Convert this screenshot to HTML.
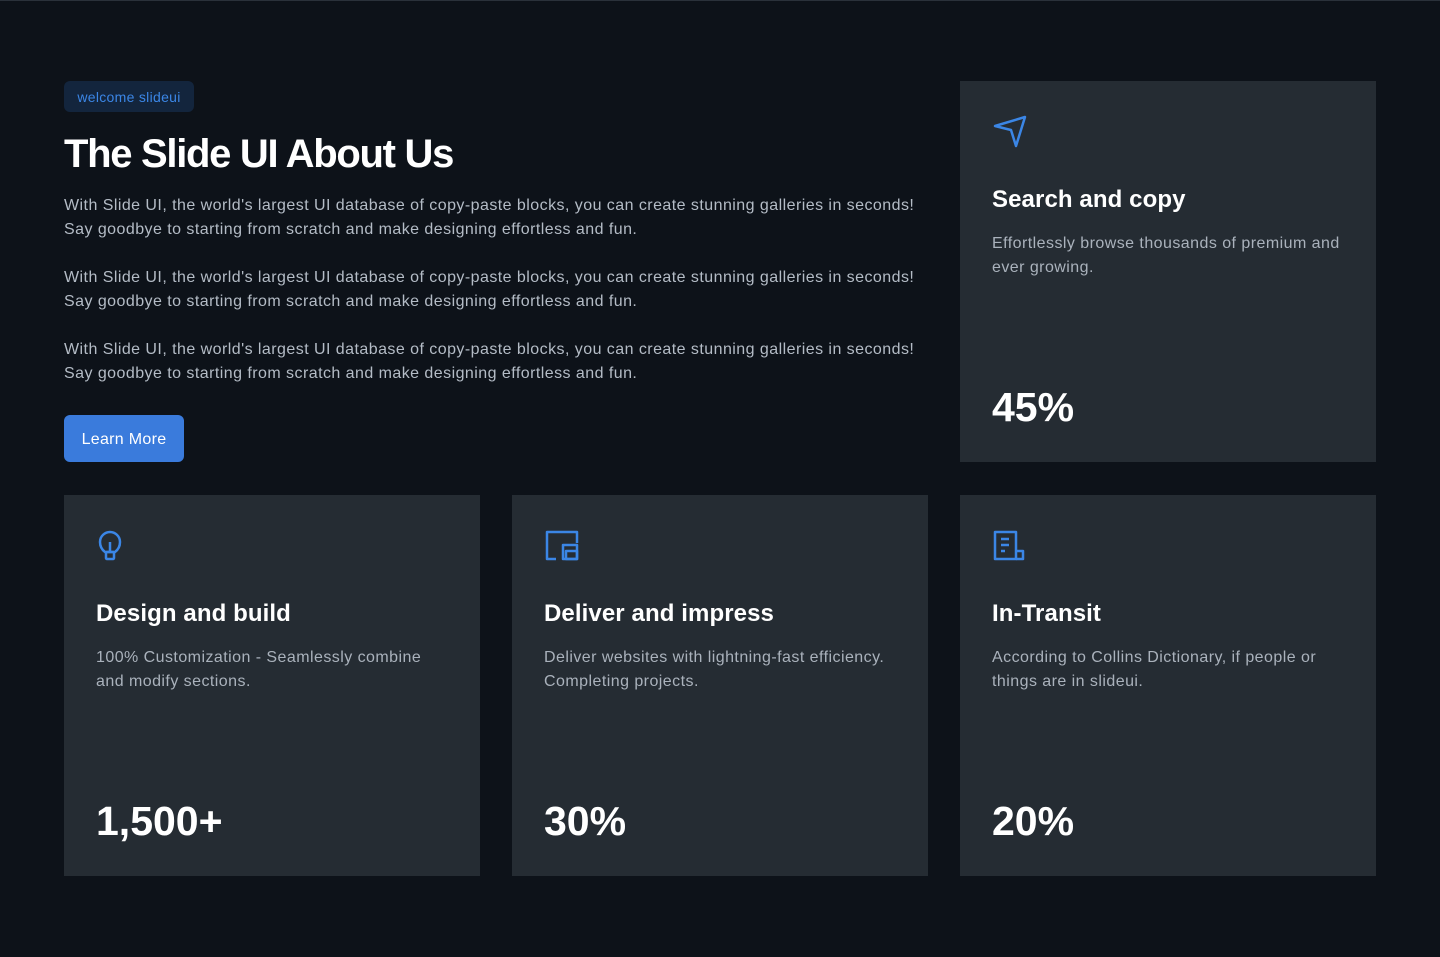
<!DOCTYPE html>
<html><head><meta charset="utf-8"><style>
*{margin:0;padding:0;box-sizing:border-box}
body{width:1440px;height:957px;background:#0d1219;font-family:"Liberation Sans",sans-serif;color:#fff;position:relative;overflow:hidden}
.top{position:absolute;left:0;top:0;width:1440px;height:1px;background:#2a313a}
.badge{position:absolute;left:64px;top:81px;width:130px;height:31px;background:#13253d;border-radius:6px;color:#3b86e6;font-size:14px;letter-spacing:.3px;line-height:32px;text-align:center}
h1{position:absolute;left:64px;top:129px;font-size:40px;font-weight:bold;letter-spacing:-1.3px;line-height:50px}
.p{position:absolute;left:64px;width:870px;font-size:16px;letter-spacing:.45px;line-height:24px;color:#b4bcc6}
.btn{position:absolute;left:64px;top:415px;width:120px;height:47px;background:#3a7bdc;border-radius:6px;font-size:16px;letter-spacing:.3px;line-height:49px;text-align:center;color:#fff}
.card{position:absolute;width:416px;height:381px;background:#252c33;padding:32px}
.card svg{position:absolute;left:32px;top:34px}
.card h3{position:absolute;left:32px;top:103px;font-size:24px;font-weight:bold;line-height:32px;letter-spacing:.1px}
.card .d{position:absolute;left:32px;top:151px;width:352px;font-size:16px;letter-spacing:.45px;line-height:24px;color:#aab2bc}
.card .s{position:absolute;left:32px;top:301px;font-size:41px;line-height:50px;font-weight:bold;letter-spacing:0}
</style></head><body>
<div class="top"></div>
<div class="badge">welcome slideui</div>
<h1>The Slide UI About Us</h1>
<div class="p" style="top:194px">With Slide UI, the world's largest UI database of copy-paste blocks, you can create stunning galleries in seconds! Say goodbye to starting from scratch and make designing effortless and fun.</div>
<div class="p" style="top:266px">With Slide UI, the world's largest UI database of copy-paste blocks, you can create stunning galleries in seconds! Say goodbye to starting from scratch and make designing effortless and fun.</div>
<div class="p" style="top:338px">With Slide UI, the world's largest UI database of copy-paste blocks, you can create stunning galleries in seconds! Say goodbye to starting from scratch and make designing effortless and fun.</div>
<div class="btn">Learn More</div>

<div class="card" style="left:960px;top:81px">
<svg width="36" height="36" viewBox="0 0 36 36" fill="none" stroke="#3b86e6" stroke-width="2.5" stroke-linejoin="round"><path d="M3 11 L33 2 L24 31 L19 15 Z"/></svg>
<h3>Search and copy</h3>
<div class="d">Effortlessly browse thousands of premium and ever growing.</div>
<div class="s">45%</div></div>

<div class="card" style="left:64px;top:495px">
<svg width="30" height="36" viewBox="0 0 30 36" fill="none" stroke="#3b86e6" stroke-width="2.5" stroke-linejoin="round"><path d="M9 23 C5 20 4 16 4 13 C4 7 9 3 14 3 C19 3 24 7 24 13 C24 16 23 20 19 23 Z"/><path d="M14 13 V23"/><rect x="10" y="23" width="8" height="7" rx="1"/></svg>
<h3>Design and build</h3>
<div class="d">100% Customization - Seamlessly combine and modify sections.</div>
<div class="s">1,500+</div></div>

<div class="card" style="left:512px;top:495px">
<svg width="36" height="36" viewBox="0 0 36 36" fill="none" stroke="#3b86e6" stroke-width="2.5" stroke-linejoin="round"><path d="M12 30 H3 V3 H33 V14"/><rect x="19" y="16" width="14" height="14"/><rect x="22" y="22" width="11" height="8"/></svg>
<h3>Deliver and impress</h3>
<div class="d">Deliver websites with lightning-fast efficiency. Completing projects.</div>
<div class="s">30%</div></div>

<div class="card" style="left:960px;top:495px">
<svg width="36" height="36" viewBox="0 0 36 36" fill="none" stroke="#3b86e6" stroke-width="2.5" stroke-linejoin="round"><path d="M3 3 H24 V30 H3 Z"/><path d="M24 22 H31 V30 H24"/><path d="M9 10 H17 M9 16 H17 M9 22 H13"/></svg>
<h3>In-Transit</h3>
<div class="d">According to Collins Dictionary, if people or things are in slideui.</div>
<div class="s">20%</div></div>
</body></html>
